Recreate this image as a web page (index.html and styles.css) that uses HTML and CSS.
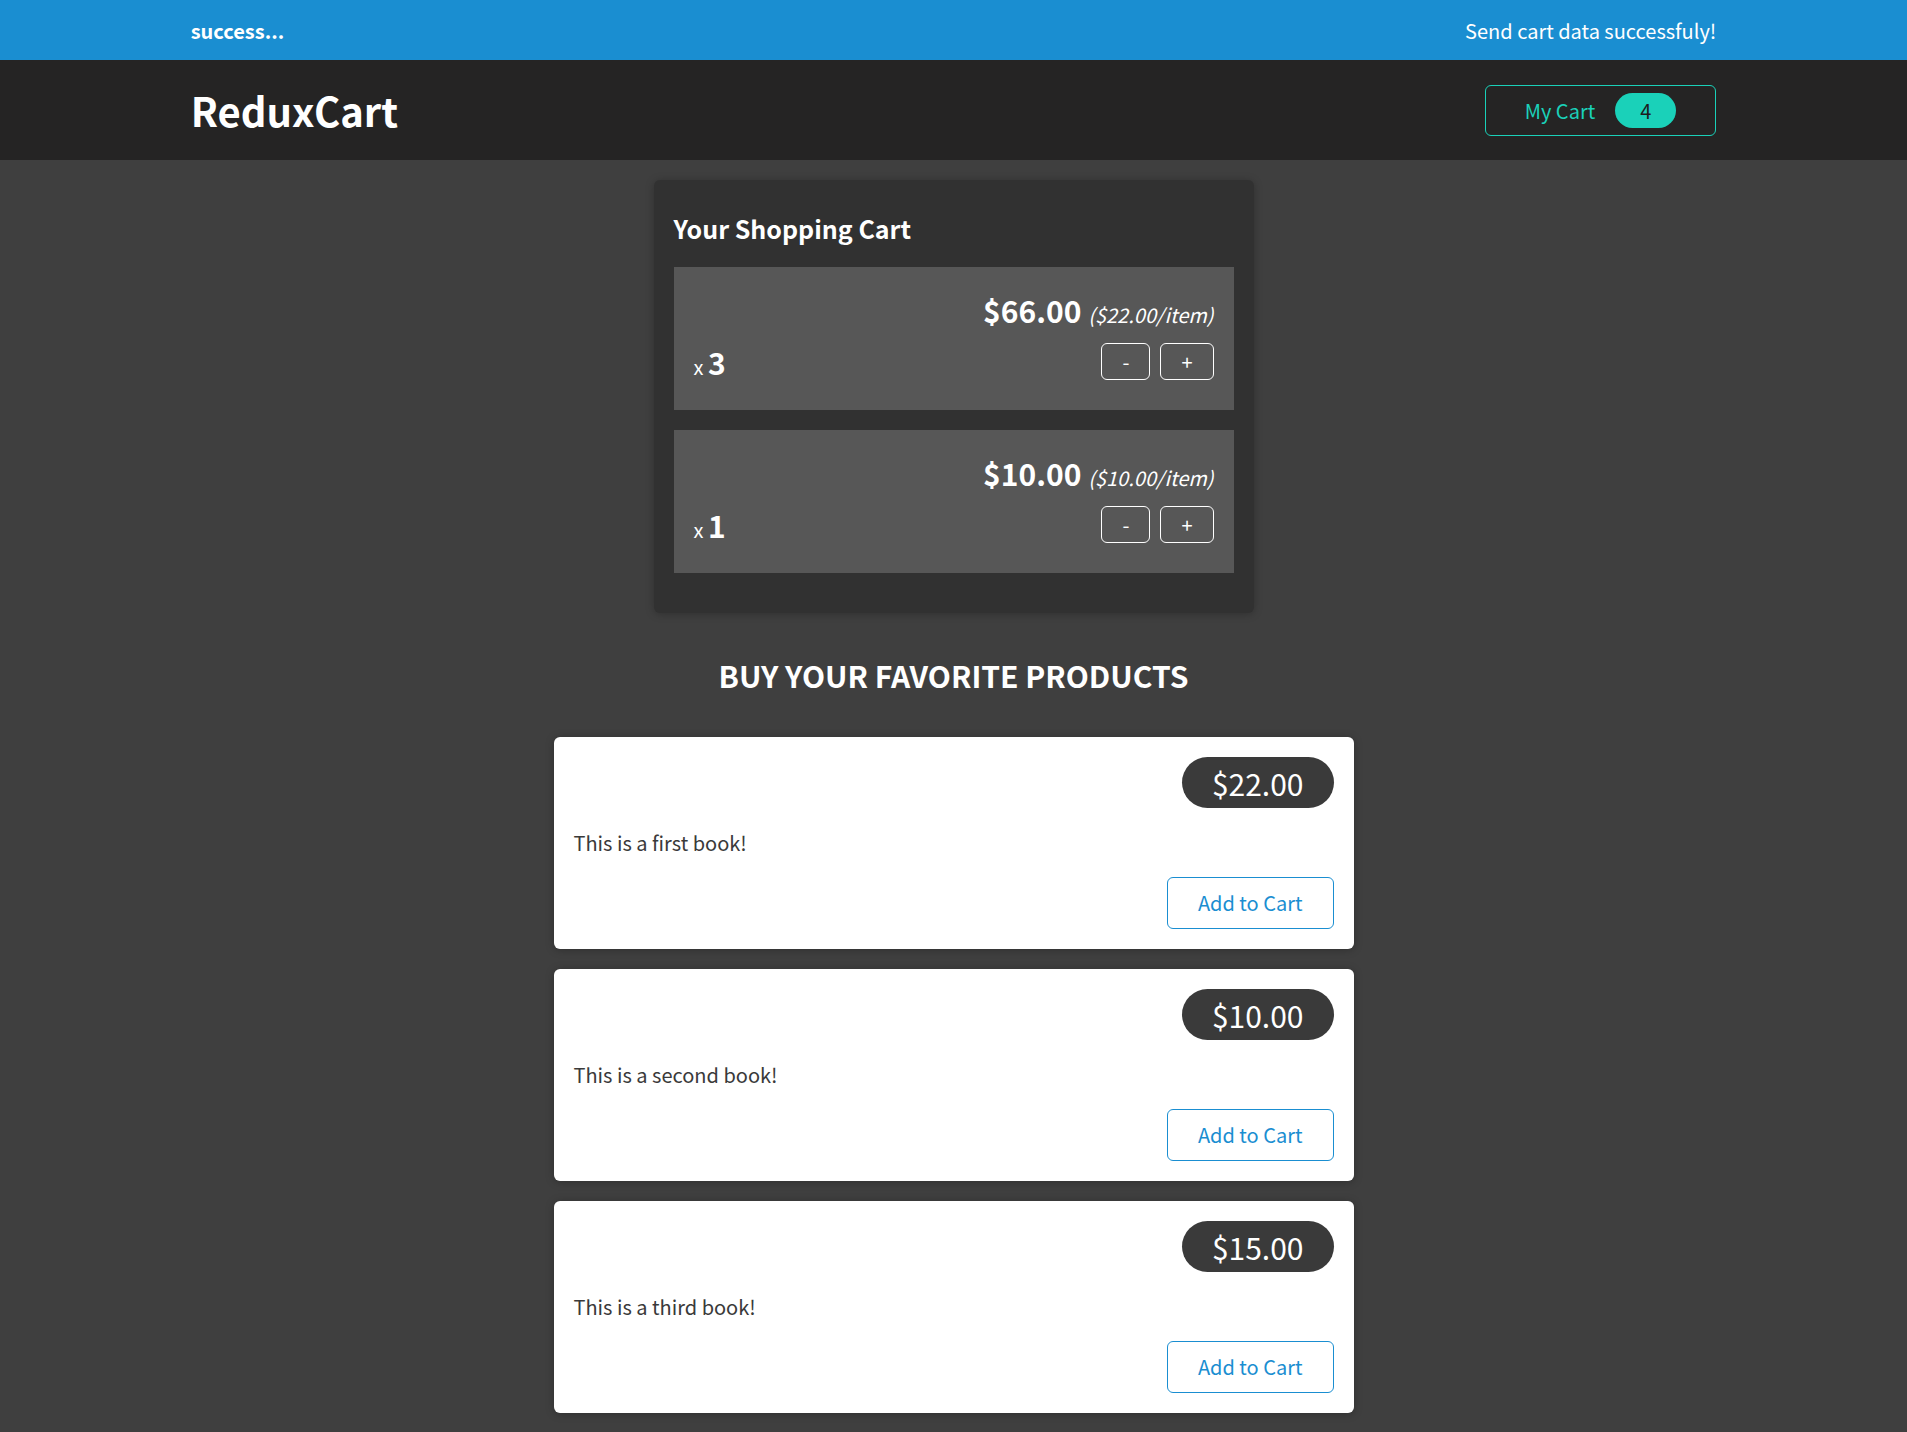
FILE: index.html
```html
<!DOCTYPE html>
<html lang="en">
<head>
<meta charset="utf-8">
<title>ReduxCart</title>
<link rel="stylesheet" href="styles.css">
</head>
<body>
<section class="notification">
  <h2>success...</h2>
  <p>Send cart data successfuly!</p>
</section>
<header class="main-header">
  <h1>ReduxCart</h1>
  <nav>
    <ul>
      <li>
        <button class="cart-button"><span>My Cart</span><span class="badge">4</span></button>
      </li>
    </ul>
  </nav>
</header>
<main class="layout">
  <section class="card cart">
    <h2>Your Shopping Cart</h2>
    <ul>
      <li class="cart-item">
        <header>
          <h3></h3>
          <div class="price">$66.00 <span class="itemprice">($22.00/item)</span></div>
        </header>
        <div class="details">
          <div class="quantity">x <span>3</span></div>
          <div class="actions">
            <button>-</button>
            <button>+</button>
          </div>
        </div>
      </li>
      <li class="cart-item">
        <header>
          <h3></h3>
          <div class="price">$10.00 <span class="itemprice">($10.00/item)</span></div>
        </header>
        <div class="details">
          <div class="quantity">x <span>1</span></div>
          <div class="actions">
            <button>-</button>
            <button>+</button>
          </div>
        </div>
      </li>
    </ul>
  </section>
  <section class="products">
    <h2>Buy your favorite products</h2>
    <ul>
      <li class="product-item">
        <div class="card">
          <header>
            <h3></h3>
            <div class="product-price">$22.00</div>
          </header>
          <p>This is a first book!</p>
          <div class="product-actions"><button>Add to Cart</button></div>
        </div>
      </li>
      <li class="product-item">
        <div class="card">
          <header>
            <h3></h3>
            <div class="product-price">$10.00</div>
          </header>
          <p>This is a second book!</p>
          <div class="product-actions"><button>Add to Cart</button></div>
        </div>
      </li>
      <li class="product-item">
        <div class="card">
          <header>
            <h3></h3>
            <div class="product-price">$15.00</div>
          </header>
          <p>This is a third book!</p>
          <div class="product-actions"><button>Add to Cart</button></div>
        </div>
      </li>
    </ul>
  </section>
</main>
</body>
</html>
```
FILE: styles.css
```css
* {
  box-sizing: border-box;
}

html {
  font-family: "Noto Sans CJK JP", "Noto Sans", sans-serif;
  font-size: 20px;
}

body {
  margin: 0;
  background-color: #3f3f3f;
}

/* Notification */
.notification {
  width: 100%;
  height: 60px;
  background-color: #1a8ed1;
  display: flex;
  justify-content: space-between;
  align-items: center;
  padding: 10px 10%;
  color: white;
}

.notification h2,
.notification p {
  font-size: 1rem;
  margin: 0;
}

/* Header */
.main-header {
  width: 100%;
  height: 100px;
  padding: 0 10%;
  display: flex;
  justify-content: space-between;
  align-items: center;
  background-color: #252424;
}

.main-header h1 {
  color: white;
  font-size: 2rem;
  margin: 0;
}

.main-header ul {
  list-style: none;
  margin: 0;
  padding: 0;
}

.cart-button {
  font: inherit;
  display: inline-block;
  background-color: transparent;
  border: 1px solid #1ad1b9;
  color: #1ad1b9;
  padding: 10px 39px;
  border-radius: 6px;
  cursor: pointer;
}

.badge {
  display: inline;
  background-color: #1ad1b9;
  border-radius: 30px;
  padding: 3px 25px;
  margin-left: 1rem;
  color: #1d1d1d;
}

/* Layout */
.layout {
  margin: 0 auto;
  width: 90%;
  max-width: 800px;
}

.card {
  padding: 1rem;
  border-radius: 6px;
  box-shadow: 0 1px 8px rgba(0, 0, 0, 0.25);
  background-color: white;
}

/* Cart */
.cart {
  max-width: 600px;
  margin: 1rem auto;
  background-color: #313131;
  color: white;
}

.cart h2 {
  font-size: 1.25rem;
  margin: 10px 0 21px 0;
}

.cart ul {
  list-style: none;
  margin: 0;
  padding: 0;
}

.cart-item {
  margin: 1rem 0;
  background-color: #575757;
  padding: 1rem;
}

.cart-item h3 {
  margin: 0 0 0.5rem 0;
  font-size: 1.25rem;
}

.cart-item header,
.cart-item .details {
  display: flex;
  justify-content: space-between;
  align-items: center;
}

.cart-item header {
  min-height: 46px;
}

.quantity span {
  font-size: 1.5rem;
  font-weight: bold;
}

.price {
  font-size: 1.5rem;
  font-weight: bold;
}

.itemprice {
  font-weight: normal;
  font-size: 1rem;
  font-style: italic;
}

.actions {
  display: flex;
  justify-content: flex-end;
  margin: 0.5rem 0;
}

.actions button {
  font: inherit;
  background-color: transparent;
  border: 1px solid white;
  border-radius: 6px;
  margin-left: 0.5rem;
  padding: 3px 20px;
  color: white;
  cursor: pointer;
}

/* Products */
.products h2 {
  margin: 2rem auto;
  font-size: 1.5rem;
  text-align: center;
  text-transform: uppercase;
  color: white;
}

.products ul {
  list-style: none;
  margin: 0;
  padding: 0;
}

.product-item {
  margin: 1rem 0;
}

.product-item header {
  display: flex;
  justify-content: space-between;
  align-items: center;
}

.product-item h3 {
  margin: 0.5rem 0;
  font-size: 1.25rem;
}

.product-item p {
  color: #3a3a3a;
}

.product-price {
  border-radius: 30px;
  padding: 3.5px 30px;
  background-color: #3a3a3a;
  color: white;
  font-size: 1.5rem;
}

.product-actions {
  display: flex;
  justify-content: flex-end;
}

.product-actions button {
  font: inherit;
  cursor: pointer;
  background-color: transparent;
  border: 1px solid #1a8ed1;
  border-radius: 6px;
  padding: 10px 30px 11px;
  color: #1a8ed1;
}
```
